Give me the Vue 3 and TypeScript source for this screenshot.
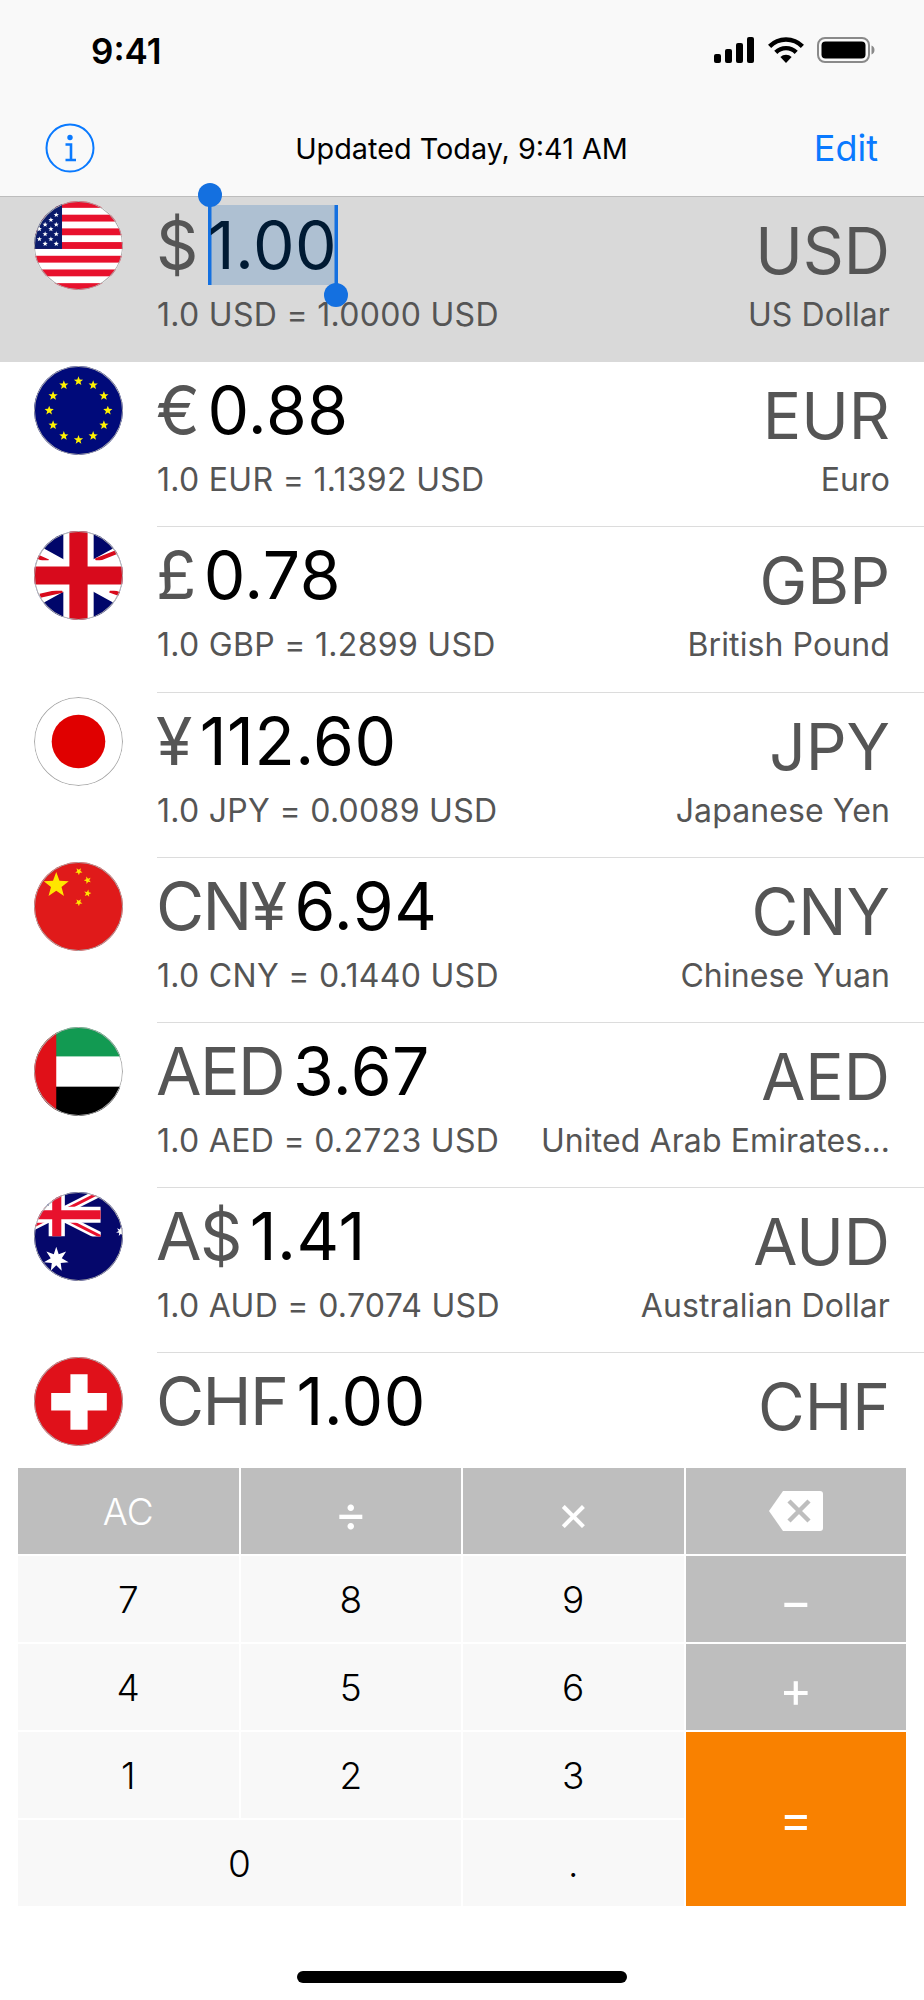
<script setup lang="ts">
interface Rate {
  code: string
  symbol: string
  amount: string
  rate: string
  name: string
}

const rates: Rate[] = [
  { code: 'USD', symbol: '$', amount: '1.00', rate: '1.0000', name: 'US Dollar' },
  { code: 'EUR', symbol: '€', amount: '0.88', rate: '1.1392', name: 'Euro' },
  { code: 'GBP', symbol: '£', amount: '0.78', rate: '1.2899', name: 'British Pound' },
  { code: 'JPY', symbol: '¥', amount: '112.60', rate: '0.0089', name: 'Japanese Yen' },
  { code: 'CNY', symbol: 'CN¥', amount: '6.94', rate: '0.1440', name: 'Chinese Yuan' },
  { code: 'AED', symbol: 'AED', amount: '3.67', rate: '0.2723', name: 'United Arab Emirates…' },
  { code: 'AUD', symbol: 'A$', amount: '1.41', rate: '0.7074', name: 'Australian Dollar' },
  { code: 'CHF', symbol: 'CHF', amount: '1.00', rate: '1.0000', name: 'Swiss Franc' },
]

interface Key {
  label: string
  kind: string
}

const keys: Key[] = [
  { label: 'AC', kind: 'op' },
  { label: '÷', kind: 'op sign' },
  { label: '×', kind: 'op sign' },
  { label: '', kind: 'op back' },
  { label: '7', kind: '' },
  { label: '8', kind: '' },
  { label: '9', kind: '' },
  { label: '−', kind: 'op sign' },
  { label: '4', kind: '' },
  { label: '5', kind: '' },
  { label: '6', kind: '' },
  { label: '+', kind: 'op sign' },
  { label: '1', kind: '' },
  { label: '2', kind: '' },
  { label: '3', kind: '' },
  { label: '=', kind: 'equals sign' },
  { label: '0', kind: 'zero' },
  { label: '.', kind: '' },
]

function star(cx: number, cy: number, r: number, points = 5, inner = 0.42, turn = 0): string {
  const out: string[] = []
  for (let i = 0; i < points * 2; i++) {
    const rad = i % 2 ? r * inner : r
    const a = -Math.PI / 2 + turn + (i * Math.PI) / points
    out.push(`${(cx + rad * Math.cos(a)).toFixed(2)},${(cy + rad * Math.sin(a)).toFixed(2)}`)
  }
  return out.join(' ')
}

const usStars = [
  [22, 13.7], [16.7, 18.7], [22, 23.3], [11, 23.3], [5.3, 27.7], [16.7, 27.7],
  [11, 32.7], [22, 32.7], [5.3, 37.7], [16.7, 37.7], [11, 42.3], [22, 42.3],
]
const euStars = Array.from({ length: 12 }, (_, i) => {
  const a = (i * Math.PI) / 6
  return [44 + 29 * Math.sin(a), 44 - 29 * Math.cos(a)]
})
</script>

<template>
  <div class="screen">
    <header class="top">
      <div class="status">
        <span class="clock">9:41</span>
        <div class="status-icons">
          <svg width="41" height="26" viewBox="0 0 41 26">
            <rect x="0" y="17" width="7" height="9" rx="2" />
            <rect x="11" y="12" width="7" height="14" rx="2" />
            <rect x="22" y="6" width="7" height="20" rx="2" />
            <rect x="33" y="0" width="7" height="26" rx="2" />
          </svg>
          <svg width="36" height="26" viewBox="0 0 36 26" fill="none" stroke="#000" stroke-width="4.4">
            <path d="M1.6 9.4a23 23 0 0 1 32.8 0" />
            <path d="M7.8 15.4a14.4 14.4 0 0 1 20.4 0" />
            <path d="M18 26l-5.6-6a8 8 0 0 1 11.2 0z" fill="#000" stroke="none" />
          </svg>
          <svg width="58" height="26" viewBox="0 0 58 26">
            <rect x="1" y="1" width="51" height="24" rx="7" fill="none" stroke="#8a8a8a" stroke-width="2" />
            <rect x="4.5" y="4.5" width="44" height="17" rx="4" />
            <path d="M54.5 8.5c2 .7 3 2.500 3 4.500s-1 3.800-3 4.500z" fill="#8a8a8a" />
          </svg>
        </div>
      </div>
      <nav class="bar">
        <svg class="info" width="50" height="50" viewBox="0 0 50 50" fill="none" stroke="#0a7aff">
          <circle cx="25" cy="25" r="23.500" stroke-width="2" />
          <circle cx="25" cy="14.500" r="2.700" fill="#0a7aff" stroke="none" />
          <path d="M20.500 21.500h5.500v15M20.500 37h10.500" stroke-width="2.600" />
        </svg>
        <span class="updated">Updated Today, 9:41 AM</span>
        <span class="edit">Edit</span>
      </nav>
    </header>

    <section class="list">
      <div v-for="(r, i) in rates" :key="r.code" class="row" :class="{ active: i === 0 }">
        <svg class="flag" width="89" height="89" viewBox="0 0 88 88">
          <template v-if="r.code === 'USD'">
            <rect width="88" height="88" fill="#fff" />
            <rect v-for="n in 7" :key="n" x="0" :y="(n - 1) * 13.540" width="88" height="6.770" fill="#e8112d" />
            <rect width="27.700" height="47.400" fill="#0a1a6a" />
            <polygon v-for="(s, n) in usStars" :key="n" :points="star(s[0], s[1], 2.700)" fill="#fff" />
          </template>
          <template v-else-if="r.code === 'EUR'">
            <rect width="88" height="88" fill="#000a7a" />
            <polygon v-for="(s, n) in euStars" :key="n" :points="star(s[0], s[1], 4.800)" fill="#fff200" />
          </template>
          <template v-else-if="r.code === 'GBP'">
            <rect width="88" height="88" fill="#00066a" />
            <path d="M-36 0L124 88M-36 88L124 0" stroke="#fff" stroke-width="14" />
            <path d="M3 25L14 30M61 29L84 20M6 64L28 59M75 59L86 63" stroke="#d80a1c" stroke-width="4" />
            <path d="M44 0V88M0 44H88" stroke="#fff" stroke-width="30" />
            <path d="M44 0V88M0 44H88" stroke="#d80a1c" stroke-width="18" />
          </template>
          <template v-else-if="r.code === 'JPY'">
            <rect width="88" height="88" fill="#fff" />
            <circle cx="44" cy="44" r="26.500" fill="#e00000" />
          </template>
          <template v-else-if="r.code === 'CNY'">
            <rect width="88" height="88" fill="#e01a1a" />
            <polygon :points="star(22, 23, 13)" fill="#ffe600" />
            <polygon :points="star(44.300, 9.300, 3.800, 5, 0.42, 0.6)" fill="#ffe600" />
            <polygon :points="star(53, 18, 3.800, 5, 0.42, 0.9)" fill="#ffe600" />
            <polygon :points="star(53, 31, 3.800, 5, 0.42, 0.2)" fill="#ffe600" />
            <polygon :points="star(44.300, 40, 3.800, 5, 0.42, 0.6)" fill="#ffe600" />
          </template>
          <template v-else-if="r.code === 'AED'">
            <rect width="88" height="29.300" fill="#129a52" />
            <rect y="29.300" width="88" height="29.700" fill="#fff" />
            <rect y="59" width="88" height="29" fill="#000" />
            <rect width="22" height="88" fill="#e01018" />
          </template>
          <template v-else-if="r.code === 'AUD'">
            <rect width="88" height="88" fill="#05076b" />
            <svg width="66" height="44">
              <path d="M-21 0L66 44M-21 44L66 0" stroke="#fff" stroke-width="8" />
              <path d="M-21 0L66 44M-21 44L66 0" stroke="#e8112d" stroke-width="3" />
              <path d="M22.500 0V44M0 22.500H66" stroke="#fff" stroke-width="16" />
              <path d="M22.500 0V44M0 22.500H66" stroke="#e8112d" stroke-width="9" />
            </svg>
            <polygon :points="star(22, 66.700, 12.500, 7, 0.45)" fill="#fff" />
            <polygon :points="star(86, 39, 5, 7, 0.45)" fill="#fff" />
          </template>
          <template v-else>
            <rect width="88" height="88" fill="#e0111a" />
            <path d="M17 35.500H36V17H53V35.500H72V53H53V72H36V53H17z" fill="#fff" />
          </template>
          <circle cx="44" cy="44" r="43.500" fill="none" stroke="#aaa" stroke-width="1" />
        </svg>
        <div class="body">
          <div class="left">
            <div class="amount">
              <span class="symbol">{{ r.symbol }}</span>
              <span class="value" :class="{ selected: i === 0 }">{{ r.amount }}</span>
            </div>
            <div v-if="i < rates.length - 1" class="sub">1.0 {{ r.code }} = {{ r.rate }} USD</div>
          </div>
          <div class="right">
            <div class="code">{{ r.code }}</div>
            <div v-if="i < rates.length - 1" class="sub name">{{ r.name }}</div>
          </div>
        </div>
      </div>
    </section>

    <section class="pad">
      <button v-for="k in keys" :key="k.label + k.kind" class="key" :class="k.kind">
        <svg v-if="k.kind === 'op back'" width="54" height="40" viewBox="0 0 54 40">
          <path d="M14 0H51a3 3 0 0 1 3 3V37a3 3 0 0 1-3 3H14L0 20z" fill="#fff" />
          <path d="M20 10L40 30M40 10L20 30" stroke="#bebebe" stroke-width="4.500" />
        </svg>
        <span v-else>{{ k.label }}</span>
      </button>
    </section>

    <div class="home-row"><div class="home"></div></div>
  </div>
</template>

<style scoped>
.screen {
  width: 924px;
  height: 2000px;
  background: #fff;
  font-family: Inter, "Liberation Sans", sans-serif;
  color: #000;
  overflow: hidden;
}
.top {
  height: 197px;
  box-sizing: border-box;
  background: #f9f9f9;
  border-bottom: 1.500px solid #bdbdbd;
}
.status {
  height: 100px;
  box-sizing: border-box;
  padding: 34px 49px 0 91px;
  display: flex;
  justify-content: space-between;
}
.clock {
  font-size: 35px;
  font-weight: 600;
  line-height: 34px;
}
.status-icons {
  display: flex;
  gap: 13px;
  align-items: flex-start;
  padding-top: 3px;
}
.bar {
  height: 96px;
  display: grid;
  grid-template-columns: 1fr auto 1fr;
  align-items: center;
  padding: 0 46px 0 45px;
}
.updated {
  font-size: 28.800px;
}
.edit {
  font-size: 36px;
  color: #0a7aff;
  justify-self: end;
}
.list {
  height: 1253px;
}
.row {
  height: 165.200px;
  box-sizing: border-box;
  padding-left: 34px;
  display: flex;
}
.row:last-child {
  height: 96px;
}
.row.active {
  background: #d9d9d9;
}
.flag {
  flex: none;
  margin-top: 4px;
  margin-right: 34px;
  border-radius: 50%;
}
.body {
  flex: 1;
  min-width: 0;
  padding-right: 34px;
  display: flex;
  justify-content: space-between;
  gap: 40px;
  border-bottom: 1.500px solid #dcdcdc;
}
.active .body,
.row:last-child .body {
  border-bottom: none;
}
.amount {
  display: flex;
  align-items: flex-start;
  gap: 9px;
  height: 90px;
  padding-top: 8px;
  font-size: 66px;
  line-height: 80px;
  white-space: nowrap;
}
.symbol {
  color: #555;
  margin-left: -1px;
  letter-spacing: -1.600px;
}
.value {
  letter-spacing: 0.500px;
}
.selected {
  position: relative;
  height: 80px;
  margin-left: 2px;
  padding-right: 1px;
  background: #aec0d2;
  color: #001a33;
  box-shadow: inset 3.500px 0 #1470e0, inset -3.500px 0 #1470e0;
}
.selected::before,
.selected::after {
  content: "";
  position: absolute;
  width: 24px;
  height: 24px;
  border-radius: 50%;
  background: #1470e0;
}
.selected::before {
  left: -10px;
  top: -22px;
}
.selected::after {
  right: -10px;
  bottom: -22px;
}
.sub {
  font-size: 32px;
  letter-spacing: 0.300px;
  line-height: 40px;
  color: #555;
  white-space: nowrap;
}
.left {
  flex: none;
}
.right {
  min-width: 0;
  text-align: right;
}
.code {
  font-size: 64px;
  line-height: 80px;
  height: 84px;
  padding-top: 14px;
  color: #555;
}
.name {
  letter-spacing: 0.100px;
}
.pad {
  margin: 18px 18px 0;
  display: grid;
  grid-template-columns: repeat(4, 1fr);
  grid-auto-rows: 86px;
  gap: 2px;
}
.key {
  border: 0;
  padding: 0;
  background: #f8f8f8;
  color: #000;
  font-family: inherit;
  font-weight: 300;
  font-size: 37px;
  display: flex;
  align-items: center;
  justify-content: center;
}
.op {
  background: #bebebe;
  color: #fff;
}
.sign {
  font-size: 50px;
  font-weight: 400;
  padding-top: 4px;
}
.equals {
  background: #f98100;
  color: #fff;
  grid-column: 4;
  grid-row: span 2;
  padding-top: 0;
}
.zero {
  grid-column: span 2;
}
.home-row {
  display: flex;
  justify-content: center;
  padding-top: 65px;
}
.home {
  width: 330px;
  height: 12px;
  border-radius: 6px;
  background: #000;
}
</style>
